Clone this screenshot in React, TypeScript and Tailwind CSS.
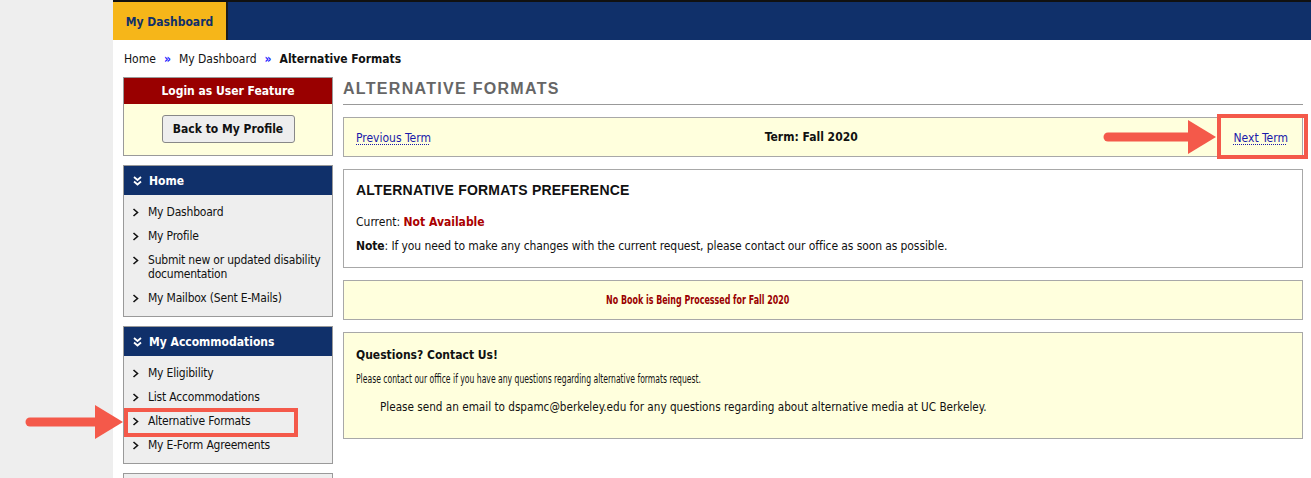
import React from "react";

const verdana = "font-['DejaVu_Sans_Condensed','DejaVu_Sans',sans-serif]";
const arial = "font-['Liberation_Sans',Arial,sans-serif]";

function Chevron() {
    return (
        <svg width="7" height="9" viewBox="0 0 7 9" className="shrink-0 mt-[3px]">
            <polyline points="1.5,1 5.5,4.5 1.5,8" fill="none" stroke="#111" strokeWidth="1.6" />
        </svg>
    );
}

function DoubleDown() {
    return (
        <svg width="9" height="10" viewBox="0 0 9 10" className="shrink-0">
            <polyline points="1,1 4.5,4 8,1" fill="none" stroke="#fff" strokeWidth="1.8" />
            <polyline points="1,5.5 4.5,8.5 8,5.5" fill="none" stroke="#fff" strokeWidth="1.8" />
        </svg>
    );
}

function NavPanel({ title, items }: { title: string; items: string[] }) {
    return (
        <div className="border border-[#9a9a9a] bg-[#eeeeee]">
            <div className="h-[29px] bg-[#10306a] flex items-center gap-[7px] pl-[9px] text-white font-bold text-[12px]">
                <DoubleDown />
                <span>{title}</span>
            </div>
            <ul className="flex flex-col gap-[10px] pt-[10px] pb-[11px] pl-[8px]">
                {items.map((item) => (
                    <li key={item} className="flex gap-[9px] text-[12px] leading-[14px] tracking-[-0.2px] text-[#111]">
                        <Chevron />
                        <span>{item}</span>
                    </li>
                ))}
            </ul>
        </div>
    );
}

function Arrow({ width }: { width: number }) {
    return (
        <svg width={width} height="38" viewBox={`0 0 ${width} 38`}>
            <line x1="5" y1="19" x2={width - 20} y2="19" stroke="#f4594a" strokeWidth="9" strokeLinecap="round" />
            <polygon points={`${width - 28},2 ${width},19 ${width - 28},36`} fill="#f4594a" />
        </svg>
    );
}

export default function App() {
    return (
        <div className={`relative flex min-h-[478px] w-[1311px] ${verdana}`}>
            <div className="w-[113px] shrink-0 bg-[#eeeeee]"></div>

            <div className="flex-1 bg-white">
                {/* top bar */}
                <div className="border-t-2 border-[#111] bg-[#10306a] h-[40px] flex">
                    <div className="w-[115px] bg-[#f6b619] border-r-2 border-[#1c1c1c] flex items-center justify-center pt-[2px] text-[#10306a] font-bold text-[12px]">
                        My Dashboard
                    </div>
                </div>

                {/* breadcrumb */}
                <div className="pl-[11px] pt-[10px] h-[37px] text-[12px] text-[#111] flex items-start gap-[8px]">
                    <span>Home</span>
                    <span className="text-[#1a1aff] font-bold">»</span>
                    <span>My Dashboard</span>
                    <span className="text-[#1a1aff] font-bold">»</span>
                    <span className="font-bold">Alternative Formats</span>
                </div>

                <div className="flex gap-[10px] pl-[10px] pr-[8px]">
                    {/* sidebar */}
                    <div className="w-[210px] shrink-0 flex flex-col gap-[9px]">
                        <div className="border border-[#9a9a9a] bg-[#ffffdd]">
                            <div className="h-[26px] bg-[#990000] text-white font-bold text-[12px] flex items-center justify-center">
                                Login as User Feature
                            </div>
                            <div className="flex justify-center pt-[11px] pb-[12px]">
                                <button className="w-[133px] h-[28px] border border-[#888] rounded-[3px] bg-[#eeeeee] font-bold text-[12px] text-[#111]">
                                    Back to My Profile
                                </button>
                            </div>
                        </div>

                        <NavPanel
                            title="Home"
                            items={[
                                "My Dashboard",
                                "My Profile",
                                "Submit new or updated disability documentation",
                                "My Mailbox (Sent E-Mails)",
                            ]}
                        />
                        <NavPanel
                            title="My Accommodations"
                            items={["My Eligibility", "List Accommodations", "Alternative Formats", "My E-Form Agreements"]}
                        />
                        <div className="border border-[#9a9a9a] bg-[#eeeeee] h-[20px]"></div>
                    </div>

                    {/* main content */}
                    <div className="flex-1 flex flex-col">
                        <h1 className={`${arial} text-[16px] font-bold tracking-[1.3px] text-[#666] h-[28px] leading-[23px] border-b border-[#999]`}>
                            ALTERNATIVE FORMATS
                        </h1>

                        <div className="mt-[12px] h-[40px] border border-[#a8a8a8] bg-[#ffffdd] flex items-center justify-between pl-[12px] pr-[14px] text-[12px]">
                            <a href="#" className="text-[#1a1aaa] underline decoration-dotted underline-offset-2 pt-[2px]">
                                Previous Term
                            </a>
                            <span className="font-bold text-[#111] pr-[42px]">Term: Fall 2020</span>
                            <a href="#" className="text-[#1a1aaa] underline decoration-dotted underline-offset-2 pt-[2px]">
                                Next Term
                            </a>
                        </div>

                        <div className="mt-[12px] h-[99px] border border-[#a8a8a8] bg-white px-[12px] pt-[12px] text-[12px] text-[#111]">
                            <div className={`${arial} font-bold text-[14px] leading-[16px] tracking-[0.2px]`}>ALTERNATIVE FORMATS PREFERENCE</div>
                            <div className="mt-[17px] leading-[14px]">
                                Current: <span className="font-bold text-[#aa0000]">Not Available</span>
                            </div>
                            <div className="mt-[10px] leading-[14px] tracking-[-0.1px]">
                                <span className="font-bold">Note</span>: If you need to make any changes with the current request, please contact our office as soon as possible.
                            </div>
                        </div>

                        <div className="mt-[12px] h-[40px] border border-[#a8a8a8] bg-[#ffffdd] flex items-center pl-[262px]">
                            <span className="font-bold text-[13px] text-[#990000] whitespace-nowrap origin-left [transform:scaleX(0.68)]">
                                No Book is Being Processed for Fall 2020
                            </span>
                        </div>

                        <div className="mt-[12px] h-[107px] border border-[#a8a8a8] bg-[#ffffdd] px-[12px] pt-[14px] text-[12px] text-[#111]">
                            <div className="font-bold leading-[16px]">Questions? Contact Us!</div>
                            <div className="mt-[8px] leading-[16px] whitespace-nowrap origin-left [transform:scaleX(0.71)]">
                                Please contact our office if you have any questions regarding alternative formats request.
                            </div>
                            <div className="mt-[12px] ml-[24px] leading-[16px] whitespace-nowrap origin-left [transform:scaleX(0.97)]">
                                Please send an email to dspamc@berkeley.edu for any questions regarding about alternative media at UC Berkeley.
                            </div>
                        </div>
                    </div>
                </div>
            </div>

            {/* annotations */}
            <div className="absolute left-[124px] top-[408px] w-[174px] h-[29px] border-[4px] border-[#f4594a]"></div>
            <div className="absolute left-[25px] top-[403px]">
                <Arrow width={98} />
            </div>
            <div className="absolute left-[1217px] top-[114px] w-[91px] h-[45px] border-[4px] border-[#f4594a]"></div>
            <div className="absolute left-[1103px] top-[118px]">
                <Arrow width={113} />
            </div>
        </div>
    );
}
